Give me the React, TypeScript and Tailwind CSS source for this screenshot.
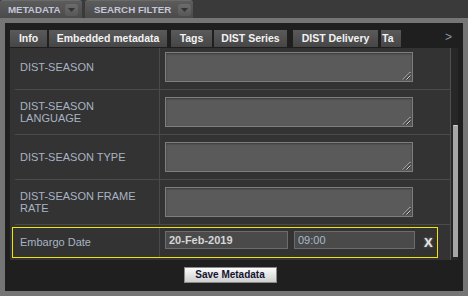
import React from "react";

function Arrow() {
  return (
    <span className="flex h-[12px] w-[13px] items-center justify-center rounded-[3px] bg-gradient-to-b from-[#6c6c6c] to-[#575757]">
      <svg width="7" height="4" viewBox="0 0 7 4">
        <path d="M0 0H7L3.5 4Z" fill="#333333" />
      </svg>
    </span>
  );
}

function Grip() {
  return (
    <svg className="absolute bottom-[1px] right-[1px]" width="9" height="9" viewBox="0 0 9 9">
      <path d="M1 8.5L8.5 1" stroke="#d0d0d0" strokeWidth="1" />
      <path d="M2 8.5L8.5 2" stroke="#2e2e2e" strokeWidth="1" />
      <path d="M4.5 8.5L8.5 4.5" stroke="#d0d0d0" strokeWidth="1" />
      <path d="M5.5 8.5L8.5 5.5" stroke="#2e2e2e" strokeWidth="1" />
    </svg>
  );
}

function Row({ label, first }: { label: React.ReactNode; first?: boolean }) {
  return (
    <div
      className={
        first
          ? "-mt-[3px] flex h-[45px] shrink-0 border-b border-[#4a4a4a]"
          : "flex h-[45px] shrink-0 border-b border-[#4a4a4a]"
      }
    >
      <div className="flex w-[144px] items-center whitespace-nowrap pl-[5px] text-[11px] leading-[12px] text-[#a8b4c4]">
        <span>{label}</span>
      </div>
      <div className="w-px bg-[#4a4a4a]" />
      <div className="flex-1 pl-[5px] pt-[7px]">
        <div className="relative h-[30px] w-[248px] border border-[#7e7e7e] bg-[#5a5a5a] shadow-[inset_0_1px_2px_rgba(0,0,0,0.35)]">
          <Grip />
        </div>
      </div>
    </div>
  );
}

const tabs: { label: string; w: string; ml: string }[] = [
  { label: "Info", w: "w-[37px]", ml: "ml-0" },
  { label: "Embedded metadata", w: "w-[118px]", ml: "ml-[2px]" },
  { label: "Tags", w: "w-[41px]", ml: "ml-[4px]" },
  { label: "DIST Series", w: "w-[73px]", ml: "ml-[2px]" },
  { label: "DIST Delivery", w: "w-[85px]", ml: "ml-[6px]" },
  { label: "Tags", w: "w-[60px]", ml: "ml-[3px]" },
];

export default function App() {
  return (
    <div className="flex h-[296px] w-[468px] flex-col overflow-hidden bg-[#3a3a3a] font-['Liberation_Sans',Arial,sans-serif]">
      {/* top tabs */}
      <div className="flex h-[18px] shrink-0 items-end">
        <div className="flex h-[18px] w-[82px] items-center rounded-t-[3px] border-t border-[#6a6a6a] bg-gradient-to-b from-[#5c5c5c] to-[#4a4a4a] pl-[8px] pr-[4px]">
          <span className="text-[9.75px] font-bold leading-none text-[#c4c6da]">METADATA</span>
          <span className="ml-auto">
            <Arrow />
          </span>
        </div>
        <div className="ml-[3px] flex h-[18px] w-[108px] items-center rounded-t-[3px] border-t border-[#6a6a6a] bg-gradient-to-b from-[#5c5c5c] to-[#4a4a4a] pl-[9px] pr-[2px]">
          <span className="text-[9.75px] font-bold leading-none text-[#c4c6da]">SEARCH FILTER</span>
          <span className="ml-auto">
            <Arrow />
          </span>
        </div>
      </div>

      {/* frame */}
      <div className="flex-1 bg-[#757575] p-[5px]">
        <div className="flex h-[268px] flex-col bg-[#1f1f1f]">
          {/* inner tab bar */}
          <div className="flex h-[25px] shrink-0 items-start pt-[7px]">
            <div className="ml-[5px] flex w-[391px] overflow-hidden">
              {tabs.map((t, i) => (
                <div
                  key={i}
                  className={`${t.w} ${t.ml} flex h-[17px] shrink-0 items-center justify-center bg-gradient-to-b from-[#5a5a5a] to-[#464646]`}
                >
                  <span className={i === 5 ? "w-full pl-[1px] text-[10.5px] font-bold leading-none text-[#f2f2f2]" : "whitespace-nowrap text-[10.5px] font-bold leading-none text-[#f2f2f2]"}>
                    {i === 5 ? "Ta" : t.label}
                  </span>
                </div>
              ))}
            </div>
            <span className="ml-[44px] mt-[1px] text-[12px] leading-none text-[#8a9aaa]">&gt;</span>
          </div>

          {/* content */}
          <div className="ml-[5px] flex h-[212px] w-[448px] shrink-0 bg-[#333333]">
            <div className="flex h-full w-[440px] flex-col overflow-hidden pl-[5px]">
              <Row first label="DIST-SEASON" />
              <Row
                label={
                  <>
                    DIST-SEASON
                    <br />
                    LANGUAGE
                  </>
                }
              />
              <Row label="DIST-SEASON TYPE" />
              <Row
                label={
                  <>
                    DIST-SEASON FRAME
                    <br />
                    RATE
                  </>
                }
              />
              <div className="-ml-[3px] mt-[2px] flex h-[31px] w-[426px] shrink-0 border border-[#f2e600]">
                <div className="flex w-[146px] items-center pl-[7px] text-[11px] leading-none text-[#a8b4c4]">
                  Embargo Date
                </div>
                <div className="w-px bg-[#4a4a4a]" />
                <div className="flex flex-1 items-start pl-[5px] pt-[3px]">
                  <div className="flex h-[18px] w-[123px] items-center border border-[#6c6c6c] bg-[#4a4a4a] pl-[3px] text-[11px] font-bold leading-none text-[#d6d6d6]">
                    20-Feb-2019
                  </div>
                  <div className="ml-[6px] flex h-[18px] w-[121px] items-center border border-[#6c6c6c] bg-[#4a4a4a] pl-[3px] text-[11px] leading-none text-[#a9b9c9]">
                    09:00
                  </div>
                  <span className="ml-[9px] mt-[6px] text-[13px] font-black leading-[12px] text-[#e4e4e4] [text-shadow:0_0_2px_#9a9a9a]">
                    X
                  </span>
                </div>
              </div>
            </div>
            {/* scrollbar */}
            <div className="relative h-full w-[8px] border-l border-[#505050] bg-[#272727]">
              <div className="absolute left-[2px] top-[77px] h-[132px] w-[5px] rounded-t-[1px] border-t border-[#d0d0d0] bg-[#a6a6a6]" />
            </div>
          </div>

          {/* bottom */}
          <div className="ml-[5px] flex w-[440px] flex-1 justify-center pt-[7px]">
            <button className="h-[16px] w-[93px] border border-[#8a8a8a] bg-gradient-to-b from-[#fbfbfb] to-[#cfcfcf] text-[10px] font-bold leading-none text-[#14142e]">
              Save Metadata
            </button>
          </div>
        </div>
      </div>
    </div>
  );
}
